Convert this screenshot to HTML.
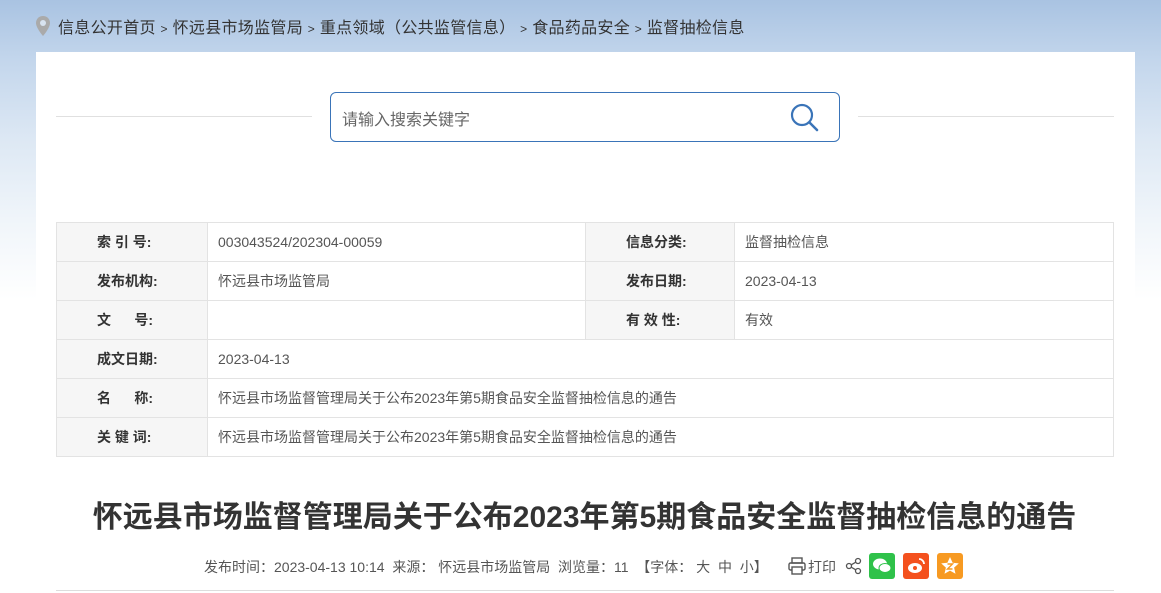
<!DOCTYPE html>
<html><head><meta charset="utf-8">
<style>
*{margin:0;padding:0;box-sizing:border-box}
html,body{width:1161px;height:593px;overflow:hidden}
body{position:relative;font-family:"Liberation Sans","Noto Sans CJK SC",sans-serif;background:linear-gradient(180deg,#a9c3e2 0px,#c3d6ec 60px,#dde8f4 140px,#f0f5fa 220px,#fff 300px)}
.bc{position:absolute;left:36px;top:14px;font-size:16px;color:#333;white-space:nowrap;letter-spacing:0.3px}
.card{position:absolute;left:36px;top:52px;width:1099px;height:541px;background:#fff}
.line{position:absolute;top:116px;height:1px;background:#e0e0e0}
.search{position:absolute;left:330px;top:92px;width:510px;height:50px;border:1px solid #3a74b8;border-radius:6px;background:#fff}
.search span{position:absolute;left:11px;top:13px;font-size:16px;color:#666}
table{position:absolute;left:56px;top:222px;width:1058px;border-collapse:collapse;font-size:14px}
td{border:1px solid #e3e3e3;height:39px;color:#555;padding:0 10px}
td.l{background:#f6f6f6;color:#333;font-weight:bold;padding-left:40px}
h1{position:absolute;left:4px;width:1161px;top:492px;text-align:center;font-size:30px;font-weight:bold;color:#333;letter-spacing:0}
.meta{position:absolute;left:204px;top:557px;font-size:14px;color:#555;white-space:nowrap}
.ic{position:absolute;top:553px;width:26px;height:26px;border-radius:3px}
</style></head><body>
<div class="bc"><svg width="14" height="20" viewBox="0 0 14 20" style="vertical-align:-3px;margin-right:8px"><path d="M7 0C3 0 0 3 0 7c0 5 7 13 7 13s7-8 7-13c0-4-3-7-7-7z" fill="#aaa"/><circle cx="7" cy="7" r="3" fill="#d8e3f0"/></svg>信息公开首页 <span style="font-size:12px">&gt;</span> 怀远县市场监管局 <span style="font-size:12px">&gt;</span> 重点领域（公共监管信息） <span style="font-size:12px">&gt;</span> 食品药品安全 <span style="font-size:12px">&gt;</span> 监督抽检信息</div>
<div class="card"></div>
<div class="line" style="left:56px;width:256px"></div>
<div class="line" style="left:858px;width:256px"></div>
<div class="search"><span>请输入搜索关键字</span>
<svg style="position:absolute;left:458px;top:9px" width="32" height="32" viewBox="0 0 32 32"><circle cx="13" cy="13" r="10" fill="none" stroke="#3a74b8" stroke-width="2.2"/><path d="M20.5 20.5L28 28" stroke="#3a74b8" stroke-width="2.5" stroke-linecap="round"/></svg></div>
<table>
<tr><td class="l" style="width:151px">索&nbsp;引&nbsp;号:</td><td style="width:378px">003043524/202304-00059</td><td class="l" style="width:149px">信息分类:</td><td>监督抽检信息</td></tr>
<tr><td class="l">发布机构:</td><td>怀远县市场监管局</td><td class="l">发布日期:</td><td>2023-04-13</td></tr>
<tr><td class="l">文&nbsp;&nbsp;&nbsp;&nbsp;&nbsp;&nbsp;号:</td><td></td><td class="l">有&nbsp;效&nbsp;性:</td><td>有效</td></tr>
<tr><td class="l">成文日期:</td><td colspan="3">2023-04-13</td></tr>
<tr><td class="l">名&nbsp;&nbsp;&nbsp;&nbsp;&nbsp;&nbsp;称:</td><td colspan="3">怀远县市场监督管理局关于公布2023年第5期食品安全监督抽检信息的通告</td></tr>
<tr><td class="l">关&nbsp;键&nbsp;词:</td><td colspan="3">怀远县市场监督管理局关于公布2023年第5期食品安全监督抽检信息的通告</td></tr>
</table>
<h1>怀远县市场监督管理局关于公布2023年第5期食品安全监督抽检信息的通告</h1>
<div class="meta">发布时间：2023-04-13 10:14&nbsp; 来源： 怀远县市场监管局&nbsp; 浏览量：11 &nbsp;【字体： 大&nbsp; 中&nbsp; 小】</div>
<div class="meta" style="left:808px">打印</div>
<svg style="position:absolute;left:787px;top:556px" width="20" height="20" viewBox="0 0 20 20" fill="none" stroke="#555" stroke-width="1.4"><rect x="5" y="2" width="10" height="5"/><rect x="2" y="7" width="16" height="7" rx="1.5"/><rect x="5" y="11" width="10" height="7" fill="#fff"/></svg>
<svg style="position:absolute;left:845px;top:557px" width="18" height="18" viewBox="0 0 18 18" fill="none" stroke="#555" stroke-width="1.3"><circle cx="13" cy="4" r="2.5"/><circle cx="4" cy="9" r="2.5"/><circle cx="13" cy="14" r="2.5"/><path d="M6.2 7.8L10.8 5.2M6.2 10.2L10.8 12.8"/></svg>
<div class="ic" style="left:869px;background:#2fc24a"><svg width="26" height="26" viewBox="0 0 26 26"><ellipse cx="11" cy="11" rx="7" ry="5.5" fill="#fff"/><ellipse cx="16" cy="15" rx="6" ry="4.5" fill="#fff" stroke="#2fc24a"/></svg></div>
<div class="ic" style="left:903px;background:#f4511e"><svg width="26" height="26" viewBox="0 0 26 26"><ellipse cx="12" cy="15" rx="7" ry="5" fill="#fff"/><circle cx="12" cy="15" r="2" fill="#f4511e"/><path d="M16 6a5 5 0 0 1 5 5" stroke="#fff" stroke-width="1.8" fill="none"/></svg></div>
<div class="ic" style="left:937px;background:#f79a22"><svg width="26" height="26" viewBox="0 0 26 26"><path d="M13 4l2.6 5.8 6.2.6-4.7 4.2 1.4 6.2L13 17.6 7.5 20.8l1.4-6.2L4.2 10.4l6.2-.6z" fill="#fff"/><path d="M10.5 11h5l-5 5h5" stroke="#f79a22" stroke-width="1.4" fill="none"/></svg></div>
<div style="position:absolute;left:56px;top:590px;width:1058px;height:1px;background:#ddd"></div>
</body></html>
